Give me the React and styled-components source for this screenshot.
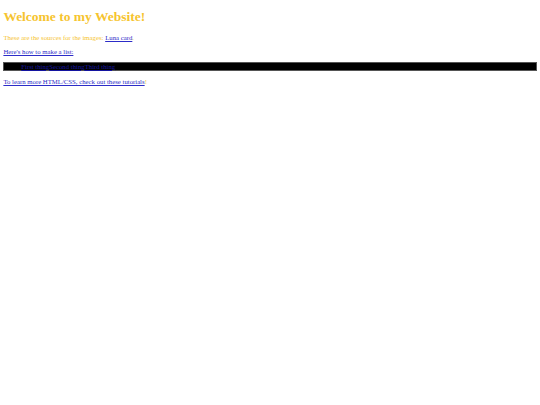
import React from 'react';
import styled, { createGlobalStyle } from 'styled-components';

// the page is a 1280px wide page shown at 540px, so every default size is scaled by 0.421875
const GlobalStyle = createGlobalStyle`
  html, body {
    background: #fff;
  }
  body {
    margin: 3.375px;
    font-family: "Liberation Serif", "Times New Roman", serif;
    font-size: 6.75px;
  }
`;

const Title = styled.h1`
  color: #f6c42f;
  font-size: 2em;
  margin: 6px 0 0.67em;
`;

const Text = styled.p`
  color: ${props => props.gold ? '#f6c42f' : '#000'};
  margin: 1em 0;
`;

const Link = styled.a`
  color: ${props => props.dark ? '#1414a0' : '#2c2cc8'};
`;

const NavList = styled.ul`
  display: flex;
  list-style: none;
  margin: 0.85em 0 1em;
  padding: 0 0 0 2.5em;
  background: #000;
  border: 0.5px solid #555;
`;

const NavItem = styled.li`
  color: #1414a0;
`;

const App = () => {
  return (
    <>
      <GlobalStyle />
      <Title>Welcome to my Website!</Title>
      <Text gold>
        These are the sources for the images: <Link href="#">Luna card</Link>.
      </Text>
      <Text>
        <Link href="#">Here's how to make a list:</Link>
      </Text>
      <NavList>
        <NavItem><Link dark href="#">First thing</Link></NavItem>
        <NavItem><Link dark href="#">Second thing</Link></NavItem>
        <NavItem><Link dark href="#">Third thing</Link></NavItem>
      </NavList>
      <Text gold>
        <Link href="#">To learn more HTML/CSS, check out these tutorials</Link>!
      </Text>
    </>
  );
};

export default App;
